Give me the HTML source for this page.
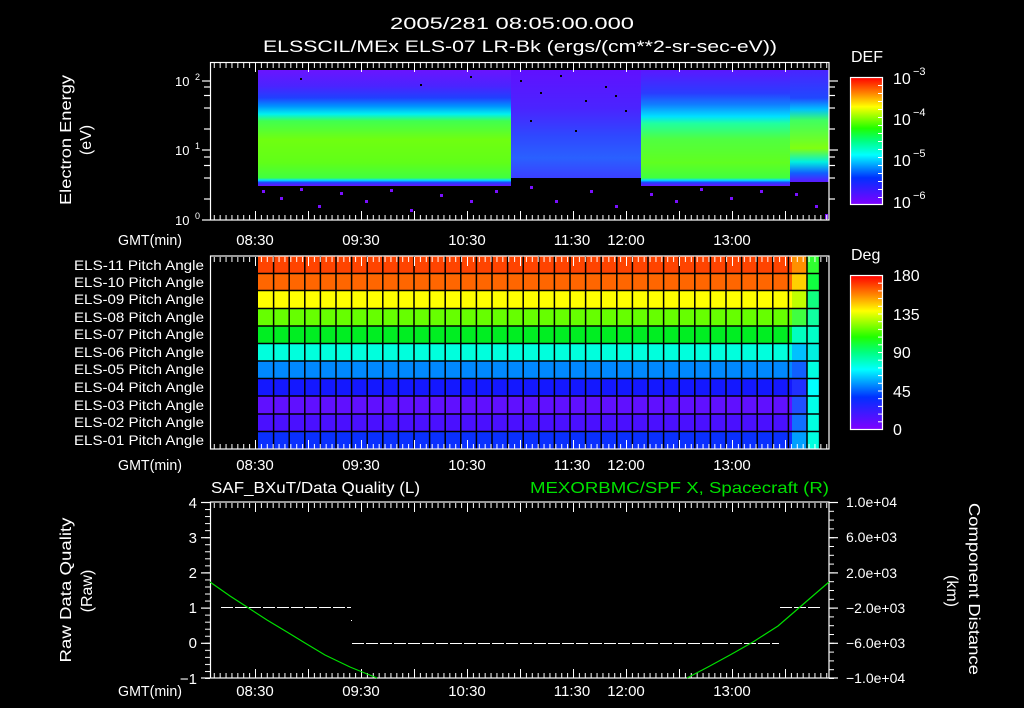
<!DOCTYPE html>
<html><head><meta charset="utf-8"><style>
html,body{margin:0;padding:0;background:#000;width:1024px;height:708px;overflow:hidden}
svg{display:block}
text{font-family:"Liberation Sans",sans-serif;fill:#fff}
</style></head><body>
<svg width="1024" height="708" viewBox="0 0 1024 708" xmlns="http://www.w3.org/2000/svg">
<defs>
<linearGradient id="gA" x1="0" y1="70" x2="0" y2="186" gradientUnits="userSpaceOnUse">
<stop offset="0" stop-color="#6a14ff"/><stop offset="0.14" stop-color="#4a24ff"/><stop offset="0.24" stop-color="#2040ff"/>
<stop offset="0.31" stop-color="#0090ff"/><stop offset="0.38" stop-color="#00f0f0"/><stop offset="0.44" stop-color="#40ff50"/>
<stop offset="0.6" stop-color="#70ff10"/><stop offset="0.8" stop-color="#60ff18"/><stop offset="0.93" stop-color="#40ff40"/>
<stop offset="0.95" stop-color="#00e0ff"/><stop offset="0.97" stop-color="#2040ff"/><stop offset="1" stop-color="#6a14ff"/>
</linearGradient>
<linearGradient id="gB" x1="0" y1="70" x2="0" y2="180" gradientUnits="userSpaceOnUse">
<stop offset="0" stop-color="#6010ff"/><stop offset="0.35" stop-color="#4a24ff"/><stop offset="0.6" stop-color="#2f48ff"/><stop offset="0.8" stop-color="#2a60ff"/><stop offset="1" stop-color="#3c3cff"/>
</linearGradient>
<linearGradient id="gC" x1="0" y1="70" x2="0" y2="186" gradientUnits="userSpaceOnUse">
<stop offset="0" stop-color="#5a18ff"/><stop offset="0.2" stop-color="#2a3cff"/><stop offset="0.3" stop-color="#1080ff"/>
<stop offset="0.4" stop-color="#00e0ff"/><stop offset="0.46" stop-color="#20ffa0"/><stop offset="0.6" stop-color="#50ff40"/>
<stop offset="0.8" stop-color="#60ff20"/><stop offset="0.93" stop-color="#40ff40"/>
<stop offset="0.95" stop-color="#00e0ff"/><stop offset="0.97" stop-color="#2040ff"/><stop offset="1" stop-color="#6a14ff"/>
</linearGradient>
<linearGradient id="gD" x1="0" y1="70" x2="0" y2="182" gradientUnits="userSpaceOnUse">
<stop offset="0" stop-color="#4a24ff"/><stop offset="0.25" stop-color="#2048ff"/><stop offset="0.35" stop-color="#00c0ff"/>
<stop offset="0.45" stop-color="#40ff60"/><stop offset="0.7" stop-color="#80ff10"/><stop offset="0.82" stop-color="#00f0e0"/>
<stop offset="0.92" stop-color="#1060ff"/><stop offset="1" stop-color="#5a18ff"/>
</linearGradient>
<linearGradient id="cbar" x1="0" y1="0" x2="0" y2="1">
<stop offset="0" stop-color="#ff0000"/><stop offset="0.12" stop-color="#ff8000"/><stop offset="0.23" stop-color="#ffff00"/>
<stop offset="0.4" stop-color="#20ff00"/><stop offset="0.5" stop-color="#00ff80"/><stop offset="0.61" stop-color="#00ffff"/>
<stop offset="0.79" stop-color="#0030ff"/><stop offset="1" stop-color="#8000ff"/>
</linearGradient>
<pattern id="tS" patternUnits="userSpaceOnUse" x="1.77" y="0" width="5.889" height="708"><rect x="0" y="0" width="1" height="708" fill="#fff"/></pattern>
<pattern id="tL" patternUnits="userSpaceOnUse" x="43" y="0" width="53" height="708"><rect x="0" y="0" width="1" height="708" fill="#fff"/></pattern>
<pattern id="lq" patternUnits="userSpaceOnUse" x="0" y="502" width="10" height="7.04"><rect x="0" y="0" width="10" height="1" fill="#fff"/></pattern>
<pattern id="rq" patternUnits="userSpaceOnUse" x="0" y="502" width="10" height="8.8"><rect x="0" y="0" width="10" height="1" fill="#fff"/></pattern>
<pattern id="cbt" patternUnits="userSpaceOnUse" x="0" y="77" width="10" height="8"><rect x="0" y="0" width="10" height="1" fill="#fff"/></pattern>
<pattern id="cbt2" patternUnits="userSpaceOnUse" x="0" y="275" width="10" height="7.7"><rect x="0" y="0" width="10" height="1" fill="#fff"/></pattern>
</defs>

<text x="512" y="29" font-size="17" text-anchor="middle" textLength="244" lengthAdjust="spacingAndGlyphs">2005/281 08:05:00.000</text>
<text x="520" y="52" font-size="17" text-anchor="middle" textLength="514" lengthAdjust="spacingAndGlyphs">ELSSCIL/MEx ELS-07 LR-Bk  (ergs/(cm**2-sr-sec-eV))</text>

<rect x="258" y="70" width="253" height="116" fill="url(#gA)"/>
<rect x="511" y="70" width="130" height="108" fill="url(#gB)"/>
<rect x="641" y="70" width="149" height="116" fill="url(#gC)"/>
<rect x="790" y="70" width="39" height="112" fill="url(#gD)"/>
<g fill="#000">
<rect x="520" y="80" width="2" height="2"/><rect x="540" y="92" width="2" height="2"/><rect x="560" y="75" width="2" height="2"/><rect x="585" y="100" width="2" height="2"/><rect x="605" y="86" width="2" height="2"/><rect x="625" y="110" width="2" height="2"/><rect x="530" y="120" width="2" height="2"/><rect x="575" y="130" width="2" height="2"/><rect x="615" y="95" width="2" height="2"/><rect x="300" y="78" width="2" height="2"/><rect x="420" y="84" width="2" height="2"/><rect x="470" y="76" width="2" height="2"/>
</g>
<g fill="#7a10ff">
<rect x="262" y="190" width="3" height="3"/><rect x="280" y="197" width="3" height="3"/><rect x="300" y="188" width="3" height="3"/><rect x="318" y="205" width="3" height="3"/><rect x="340" y="192" width="3" height="3"/><rect x="365" y="200" width="3" height="3"/><rect x="390" y="189" width="3" height="3"/><rect x="410" y="209" width="3" height="3"/><rect x="440" y="194" width="3" height="3"/><rect x="470" y="200" width="3" height="3"/><rect x="495" y="190" width="3" height="3"/><rect x="530" y="186" width="3" height="3"/><rect x="555" y="200" width="3" height="3"/><rect x="590" y="190" width="3" height="3"/><rect x="615" y="205" width="3" height="3"/><rect x="650" y="193" width="3" height="3"/><rect x="675" y="200" width="3" height="3"/><rect x="700" y="188" width="3" height="3"/><rect x="730" y="197" width="3" height="3"/><rect x="760" y="190" width="3" height="3"/><rect x="795" y="193" width="3" height="3"/><rect x="815" y="205" width="3" height="3"/><rect x="825" y="214" width="3" height="5"/>
</g>
<rect x="210.5" y="62.5" width="618.5" height="157.5" fill="none" stroke="#fff" stroke-width="1.2"/>
<rect x="210" y="63" width="619" height="5" fill="url(#tS)"/><rect x="210" y="63" width="619" height="9" fill="url(#tL)"/>
<rect x="210" y="215" width="619" height="5" fill="url(#tS)"/><rect x="210" y="211" width="619" height="9" fill="url(#tL)"/>
<g stroke="#fff" stroke-width="1.2">
<line x1="202" y1="220" x2="210" y2="220"/><line x1="202" y1="150" x2="210" y2="150"/><line x1="202" y1="81" x2="210" y2="81"/>
<line x1="204" y1="199" x2="210" y2="199"/><line x1="204" y1="178" x2="210" y2="178"/><line x1="204" y1="165.5" x2="210" y2="165.5"/><line x1="204" y1="157" x2="210" y2="157"/>
<line x1="204" y1="129" x2="210" y2="129"/><line x1="204" y1="108" x2="210" y2="108"/><line x1="204" y1="95.5" x2="210" y2="95.5"/><line x1="204" y1="87" x2="210" y2="87"/>
<line x1="829" y1="150" x2="838" y2="150"/><line x1="829" y1="81" x2="838" y2="81"/>
<line x1="829" y1="199" x2="835" y2="199"/><line x1="829" y1="178" x2="835" y2="178"/><line x1="829" y1="165.5" x2="835" y2="165.5"/><line x1="829" y1="157" x2="835" y2="157"/>
<line x1="829" y1="129" x2="835" y2="129"/><line x1="829" y1="108" x2="835" y2="108"/><line x1="829" y1="95.5" x2="835" y2="95.5"/><line x1="829" y1="87" x2="835" y2="87"/>
</g>
<text x="175" y="86" font-size="13">10</text><text x="195" y="80" font-size="9">2</text>
<text x="175" y="155" font-size="13">10</text><text x="195" y="149" font-size="9">1</text>
<text x="175" y="225" font-size="13">10</text><text x="195" y="219" font-size="9">0</text>
<g transform="translate(71,140) rotate(-90)"><text x="0" y="0" font-size="16" text-anchor="middle" textLength="130" lengthAdjust="spacingAndGlyphs">Electron Energy</text></g>
<g transform="translate(91,140) rotate(-90)"><text x="0" y="0" font-size="16" text-anchor="middle">(eV)</text></g>

<g font-size="15">
<text x="182" y="245" text-anchor="end" textLength="64" lengthAdjust="spacingAndGlyphs">GMT(min)</text>
<text x="255" y="245" text-anchor="middle">08:30</text><text x="361" y="245" text-anchor="middle">09:30</text><text x="467" y="245" text-anchor="middle">10:30</text><text x="572" y="245" text-anchor="middle">11:30</text><text x="626" y="245" text-anchor="middle">12:00</text><text x="732" y="245" text-anchor="middle">13:00</text>
<text x="182" y="470" text-anchor="end" textLength="64" lengthAdjust="spacingAndGlyphs">GMT(min)</text>
<text x="255" y="470" text-anchor="middle">08:30</text><text x="361" y="470" text-anchor="middle">09:30</text><text x="467" y="470" text-anchor="middle">10:30</text><text x="572" y="470" text-anchor="middle">11:30</text><text x="626" y="470" text-anchor="middle">12:00</text><text x="732" y="470" text-anchor="middle">13:00</text>
<text x="182" y="696" text-anchor="end" textLength="64" lengthAdjust="spacingAndGlyphs">GMT(min)</text>
<text x="255" y="696" text-anchor="middle">08:30</text><text x="361" y="696" text-anchor="middle">09:30</text><text x="467" y="696" text-anchor="middle">10:30</text><text x="572" y="696" text-anchor="middle">11:30</text><text x="626" y="696" text-anchor="middle">12:00</text><text x="732" y="696" text-anchor="middle">13:00</text>
</g>

<text x="851" y="62" font-size="16">DEF</text>
<rect x="850.5" y="77.5" width="32" height="127" fill="url(#cbar)" stroke="#fff" stroke-width="1.2"/>
<rect x="878" y="78" width="4" height="126" fill="url(#cbt)"/>
<g font-size="16"><text x="893" y="84">10</text><text x="893" y="125">10</text><text x="893" y="166">10</text><text x="893" y="208">10</text></g>
<g font-size="11"><text x="913" y="75">−3</text><text x="913" y="116">−4</text><text x="913" y="157">−5</text><text x="913" y="199">−6</text></g>

<g>
<rect x="258" y="256" width="534" height="18" fill="#ff4400"/>
<rect x="258" y="273" width="534" height="18" fill="#ff6600"/>
<rect x="258" y="290" width="534" height="18" fill="#ffff00"/>
<rect x="258" y="308" width="534" height="18" fill="#66ff00"/>
<rect x="258" y="326" width="534" height="18" fill="#00ee22"/>
<rect x="258" y="343" width="534" height="18" fill="#00ffdd"/>
<rect x="258" y="361" width="534" height="18" fill="#0088ff"/>
<rect x="258" y="378" width="534" height="18" fill="#1418ff"/>
<rect x="258" y="396" width="534" height="18" fill="#6010ff"/>
<rect x="258" y="414" width="534" height="18" fill="#4a10ff"/>
<rect x="258" y="431" width="534" height="18" fill="#0a30ff"/>
<rect x="792" y="256" width="15" height="18" fill="#ff9000"/><rect x="807" y="256" width="13" height="18" fill="#30ff30"/>
<rect x="792" y="273" width="15" height="18" fill="#ffd000"/><rect x="807" y="273" width="13" height="18" fill="#10ff40"/>
<rect x="792" y="290" width="15" height="18" fill="#c0ff00"/><rect x="807" y="290" width="13" height="18" fill="#10ff80"/>
<rect x="792" y="308" width="15" height="18" fill="#40ff40"/><rect x="807" y="308" width="13" height="18" fill="#10ffa0"/>
<rect x="792" y="326" width="15" height="18" fill="#00ffc0"/><rect x="807" y="326" width="13" height="18" fill="#00ffc8"/>
<rect x="792" y="343" width="15" height="18" fill="#00c0ff"/><rect x="807" y="343" width="13" height="18" fill="#00f0e0"/>
<rect x="792" y="361" width="15" height="18" fill="#1060ff"/><rect x="807" y="361" width="13" height="18" fill="#00ffe0"/>
<rect x="792" y="378" width="15" height="18" fill="#2030ff"/><rect x="807" y="378" width="13" height="18" fill="#00ffff"/>
<rect x="792" y="396" width="15" height="18" fill="#2050ff"/><rect x="807" y="396" width="13" height="18" fill="#00ffe8"/>
<rect x="792" y="414" width="15" height="18" fill="#1070ff"/><rect x="807" y="414" width="13" height="18" fill="#00ffe0"/>
<rect x="792" y="431" width="15" height="18" fill="#00a0ff"/><rect x="807" y="431" width="13" height="18" fill="#00ffe0"/>
</g>
<g stroke="#000" stroke-width="1.5">
<line x1="258" y1="273.5" x2="820" y2="273.5"/><line x1="258" y1="290.5" x2="820" y2="290.5"/><line x1="258" y1="308.5" x2="820" y2="308.5"/><line x1="258" y1="326" x2="820" y2="326"/><line x1="258" y1="343.5" x2="820" y2="343.5"/><line x1="258" y1="361" x2="820" y2="361"/><line x1="258" y1="378.5" x2="820" y2="378.5"/><line x1="258" y1="396" x2="820" y2="396"/><line x1="258" y1="414" x2="820" y2="414"/><line x1="258" y1="431.5" x2="820" y2="431.5"/>
<line x1="273.6" y1="256" x2="273.6" y2="449"/><line x1="289.2" y1="256" x2="289.2" y2="449"/><line x1="304.8" y1="256" x2="304.8" y2="449"/><line x1="320.4" y1="256" x2="320.4" y2="449"/><line x1="336" y1="256" x2="336" y2="449"/><line x1="351.6" y1="256" x2="351.6" y2="449"/><line x1="367.2" y1="256" x2="367.2" y2="449"/><line x1="382.8" y1="256" x2="382.8" y2="449"/><line x1="398.4" y1="256" x2="398.4" y2="449"/><line x1="414" y1="256" x2="414" y2="449"/><line x1="429.6" y1="256" x2="429.6" y2="449"/><line x1="445.2" y1="256" x2="445.2" y2="449"/><line x1="460.8" y1="256" x2="460.8" y2="449"/><line x1="476.4" y1="256" x2="476.4" y2="449"/><line x1="492" y1="256" x2="492" y2="449"/><line x1="507.6" y1="256" x2="507.6" y2="449"/><line x1="523.2" y1="256" x2="523.2" y2="449"/><line x1="538.8" y1="256" x2="538.8" y2="449"/><line x1="554.4" y1="256" x2="554.4" y2="449"/><line x1="570" y1="256" x2="570" y2="449"/><line x1="585.6" y1="256" x2="585.6" y2="449"/><line x1="601.2" y1="256" x2="601.2" y2="449"/><line x1="616.8" y1="256" x2="616.8" y2="449"/><line x1="632.4" y1="256" x2="632.4" y2="449"/><line x1="648" y1="256" x2="648" y2="449"/><line x1="663.6" y1="256" x2="663.6" y2="449"/><line x1="679.2" y1="256" x2="679.2" y2="449"/><line x1="694.8" y1="256" x2="694.8" y2="449"/><line x1="710.4" y1="256" x2="710.4" y2="449"/><line x1="726" y1="256" x2="726" y2="449"/><line x1="741.6" y1="256" x2="741.6" y2="449"/><line x1="757.2" y1="256" x2="757.2" y2="449"/><line x1="772.8" y1="256" x2="772.8" y2="449"/><line x1="788.4" y1="256" x2="788.4" y2="449"/><line x1="807" y1="256" x2="807" y2="449"/><line x1="819.6" y1="256" x2="819.6" y2="449"/>
</g>
<rect x="210.5" y="256" width="618.5" height="193" fill="none" stroke="#fff" stroke-width="1.2"/>
<rect x="210" y="257" width="619" height="5" fill="url(#tS)"/><rect x="210" y="257" width="619" height="9" fill="url(#tL)"/>
<rect x="210" y="444" width="619" height="5" fill="url(#tS)"/><rect x="210" y="440" width="619" height="9" fill="url(#tL)"/>
<g font-size="14" text-anchor="end">
<text x="204" y="270" textLength="130" lengthAdjust="spacingAndGlyphs">ELS-11 Pitch Angle</text>
<text x="204" y="287" textLength="130" lengthAdjust="spacingAndGlyphs">ELS-10 Pitch Angle</text>
<text x="204" y="304" textLength="130" lengthAdjust="spacingAndGlyphs">ELS-09 Pitch Angle</text>
<text x="204" y="322" textLength="130" lengthAdjust="spacingAndGlyphs">ELS-08 Pitch Angle</text>
<text x="204" y="339" textLength="130" lengthAdjust="spacingAndGlyphs">ELS-07 Pitch Angle</text>
<text x="204" y="357" textLength="130" lengthAdjust="spacingAndGlyphs">ELS-06 Pitch Angle</text>
<text x="204" y="374" textLength="130" lengthAdjust="spacingAndGlyphs">ELS-05 Pitch Angle</text>
<text x="204" y="392" textLength="130" lengthAdjust="spacingAndGlyphs">ELS-04 Pitch Angle</text>
<text x="204" y="410" textLength="130" lengthAdjust="spacingAndGlyphs">ELS-03 Pitch Angle</text>
<text x="204" y="427" textLength="130" lengthAdjust="spacingAndGlyphs">ELS-02 Pitch Angle</text>
<text x="204" y="445" textLength="130" lengthAdjust="spacingAndGlyphs">ELS-01 Pitch Angle</text>
</g>

<text x="851" y="260" font-size="16">Deg</text>
<rect x="850.5" y="275.5" width="32" height="154" fill="url(#cbar)" stroke="#fff" stroke-width="1.2"/>
<rect x="878" y="276" width="4" height="153" fill="url(#cbt2)"/>
<g font-size="16"><text x="893" y="281">180</text><text x="893" y="320">135</text><text x="893" y="358">90</text><text x="893" y="397">45</text><text x="893" y="435">0</text></g>

<text x="211" y="493" font-size="16" textLength="209" lengthAdjust="spacingAndGlyphs">SAF_BXuT/Data Quality (L)</text>
<text x="829" y="493" font-size="16" text-anchor="end" textLength="299" lengthAdjust="spacingAndGlyphs" style="fill:#00e000">MEXORBMC/SPF X, Spacecraft (R)</text>
<rect x="210.5" y="502" width="618.5" height="176" fill="none" stroke="#fff" stroke-width="1.2"/>
<rect x="210" y="503" width="619" height="5" fill="url(#tS)"/><rect x="210" y="503" width="619" height="9" fill="url(#tL)"/>
<rect x="210" y="673" width="619" height="5" fill="url(#tS)"/><rect x="210" y="669" width="619" height="9" fill="url(#tL)"/>
<rect x="205" y="502" width="5" height="177" fill="url(#lq)"/>
<g stroke="#fff" stroke-width="1.2"><line x1="201" y1="502.5" x2="210" y2="502.5"/><line x1="201" y1="537.7" x2="210" y2="537.7"/><line x1="201" y1="572.9" x2="210" y2="572.9"/><line x1="201" y1="608.1" x2="210" y2="608.1"/><line x1="201" y1="643.3" x2="210" y2="643.3"/><line x1="201" y1="678" x2="210" y2="678"/>
<line x1="829" y1="502.5" x2="838" y2="502.5"/><line x1="829" y1="537.7" x2="838" y2="537.7"/><line x1="829" y1="572.9" x2="838" y2="572.9"/><line x1="829" y1="608.1" x2="838" y2="608.1"/><line x1="829" y1="643.3" x2="838" y2="643.3"/><line x1="829" y1="678" x2="838" y2="678"/></g>
<rect x="829" y="502" width="5" height="177" fill="url(#rq)"/>
<g font-size="15" text-anchor="end"><text x="197" y="508">4</text><text x="197" y="543">3</text><text x="197" y="578">2</text><text x="197" y="613">1</text><text x="197" y="648">0</text><text x="197" y="684">−1</text></g>
<g font-size="14"><text x="846" y="507">1.0e+04</text><text x="846" y="542">6.0e+03</text><text x="846" y="578">2.0e+03</text><text x="846" y="613">−2.0e+03</text><text x="846" y="648">−6.0e+03</text><text x="846" y="683">−1.0e+04</text></g>
<g stroke="#fff" stroke-width="1" stroke-dasharray="12 2" fill="none">
<line x1="221" y1="607.5" x2="351" y2="607.5"/><line x1="352" y1="643.5" x2="779" y2="643.5"/><line x1="780" y1="607.5" x2="820" y2="607.5"/>
</g>
<rect x="351" y="620" width="1" height="1" fill="#fff"/>
<polyline points="210,582 230,596 247,607 267,620 287,632 305,643 325,655 350,667 377,678" fill="none" stroke="#00e000" stroke-width="1.2"/>
<polyline points="687,678 708,667 730,655 753,642 778,626 800,607 815,594 829,582" fill="none" stroke="#00e000" stroke-width="1.2"/>
<g transform="translate(71,590) rotate(-90)"><text x="0" y="0" font-size="16" text-anchor="middle" textLength="145" lengthAdjust="spacingAndGlyphs">Raw Data Quality</text></g>
<g transform="translate(92,591) rotate(-90)"><text x="0" y="0" font-size="16" text-anchor="middle">(Raw)</text></g>
<g transform="translate(969,589) rotate(90)"><text x="0" y="0" font-size="16" text-anchor="middle" textLength="172" lengthAdjust="spacingAndGlyphs">Component Distance</text></g>
<g transform="translate(947,591) rotate(90)"><text x="0" y="0" font-size="16" text-anchor="middle">(km)</text></g>
</svg>
</body></html>
